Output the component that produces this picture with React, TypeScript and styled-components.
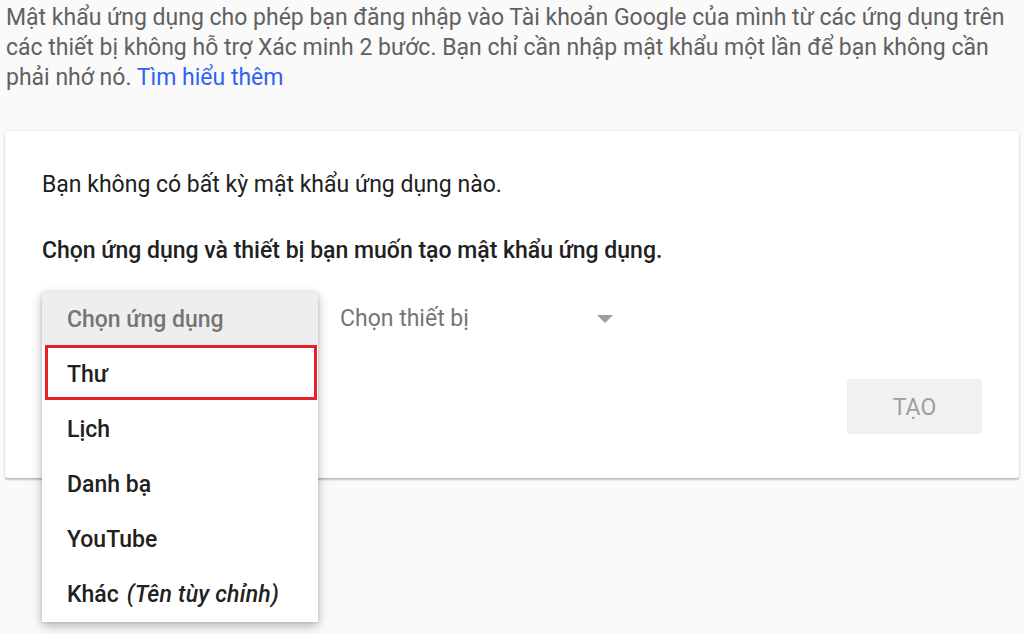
import styled, { createGlobalStyle } from 'styled-components';

const GlobalStyle = createGlobalStyle`
  body {
    margin: 0;
    background: #fafafa;
    font-family: Roboto, "Noto Sans", "Liberation Sans", sans-serif;
  }
`;

const Page = styled.div`
  padding: 3px 5px 0 5px;
  width: 1024px;
  min-height: 634px;
  box-sizing: border-box;
`;

const Intro = styled.p`
  margin: 0 0 38px 1px;
  font-size: 23px;
  line-height: 30px;
  color: #616161;
  width: 1010px;
`;

const Link = styled.a`
  color: #2f63f2;
  text-decoration: none;
`;

const Card = styled.div`
  background: #fff;
  border-radius: 3px;
  box-shadow: 0 2px 2px rgba(0, 0, 0, 0.22), 0 0 3px rgba(0, 0, 0, 0.1);
  padding: 39px 37px 44px 37px;
  display: flex;
  flex-direction: column;
`;

const Text = styled.div<{ $bold?: boolean }>`
  font-size: 23px;
  line-height: 30px;
  color: #212121;
  font-weight: ${(p) => (p.$bold ? 500 : 400)};
  margin-bottom: ${(p) => (p.$bold ? 26 : 36)}px;
`;

const SelectRow = styled.div`
  display: flex;
  align-items: center;
  height: 53px;
  gap: 22px;
`;

const AppSelect = styled.div`
  position: relative;
  width: 276px;
  height: 53px;
`;

const Menu = styled.ul`
  position: absolute;
  top: 0;
  left: 0;
  z-index: 2;
  width: 276px;
  margin: 0;
  padding: 0 0 2px 0;
  list-style: none;
  background: #fff;
  box-shadow: 0 4px 10px rgba(0, 0, 0, 0.28), 0 0 3px rgba(0, 0, 0, 0.12);
`;

const MenuHeader = styled.li`
  height: 53px;
  display: flex;
  align-items: center;
  padding-left: 25px;
  padding-top: 2px;
  box-sizing: border-box;
  background: #eeeeee;
  color: #757575;
  font-size: 23px;
  font-weight: 500;
`;

const MenuItem = styled.li<{ $active?: boolean }>`
  height: 55px;
  display: flex;
  align-items: center;
  box-sizing: border-box;
  padding-top: ${(p) => (p.$active ? 3 : 4)}px;
  padding-left: ${(p) => (p.$active ? 19 : 25)}px;
  margin: ${(p) => (p.$active ? '0 1px 0 3px' : '0')};
  border: ${(p) => (p.$active ? '3px solid #e8202e' : 'none')};
  color: #212121;
  font-size: 23px;
  font-weight: 500;
`;

const Hint = styled.i`
  margin-left: 8px;
  font-weight: 500;
  letter-spacing: 0.2px;
`;

const DeviceSelect = styled.div`
  width: 273px;
  display: flex;
  align-items: center;
  justify-content: space-between;
  font-size: 23px;
  color: #757575;
`;

const Arrow = styled.span`
  width: 0;
  height: 0;
  border-left: 8px solid transparent;
  border-right: 8px solid transparent;
  border-top: 8px solid #9e9e9e;
`;

const Actions = styled.div`
  display: flex;
  justify-content: flex-end;
  margin-top: 34px;
`;

const CreateButton = styled.button`
  width: 135px;
  height: 55px;
  padding-top: 2px;
  border: none;
  border-radius: 3px;
  background: #f1f1f1;
  color: #9e9e9e;
  font-family: inherit;
  font-size: 23px;
`;

const apps = ['Thư', 'Lịch', 'Danh bạ', 'YouTube'];

export default function App() {
  return (
    <Page>
      <GlobalStyle />
      <Intro>
        Mật khẩu ứng dụng cho phép bạn đăng nhập vào Tài khoản Google của mình từ các ứng dụng trên
        các thiết bị không hỗ trợ Xác minh 2 bước. Bạn chỉ cần nhập mật khẩu một lần để bạn không cần
        phải nhớ nó. <Link href="#">Tìm hiểu thêm</Link>
      </Intro>
      <Card>
        <Text>Bạn không có bất kỳ mật khẩu ứng dụng nào.</Text>
        <Text $bold>Chọn ứng dụng và thiết bị bạn muốn tạo mật khẩu ứng dụng.</Text>
        <SelectRow>
          <AppSelect>
            <Menu>
              <MenuHeader>Chọn ứng dụng</MenuHeader>
              {apps.map((name, i) => (
                <MenuItem key={name} $active={i === 0}>
                  {name}
                </MenuItem>
              ))}
              <MenuItem>
                Khác<Hint>(Tên tùy chỉnh)</Hint>
              </MenuItem>
            </Menu>
          </AppSelect>
          <DeviceSelect>
            Chọn thiết bị
            <Arrow />
          </DeviceSelect>
        </SelectRow>
        <Actions>
          <CreateButton>TẠO</CreateButton>
        </Actions>
      </Card>
    </Page>
  );
}
